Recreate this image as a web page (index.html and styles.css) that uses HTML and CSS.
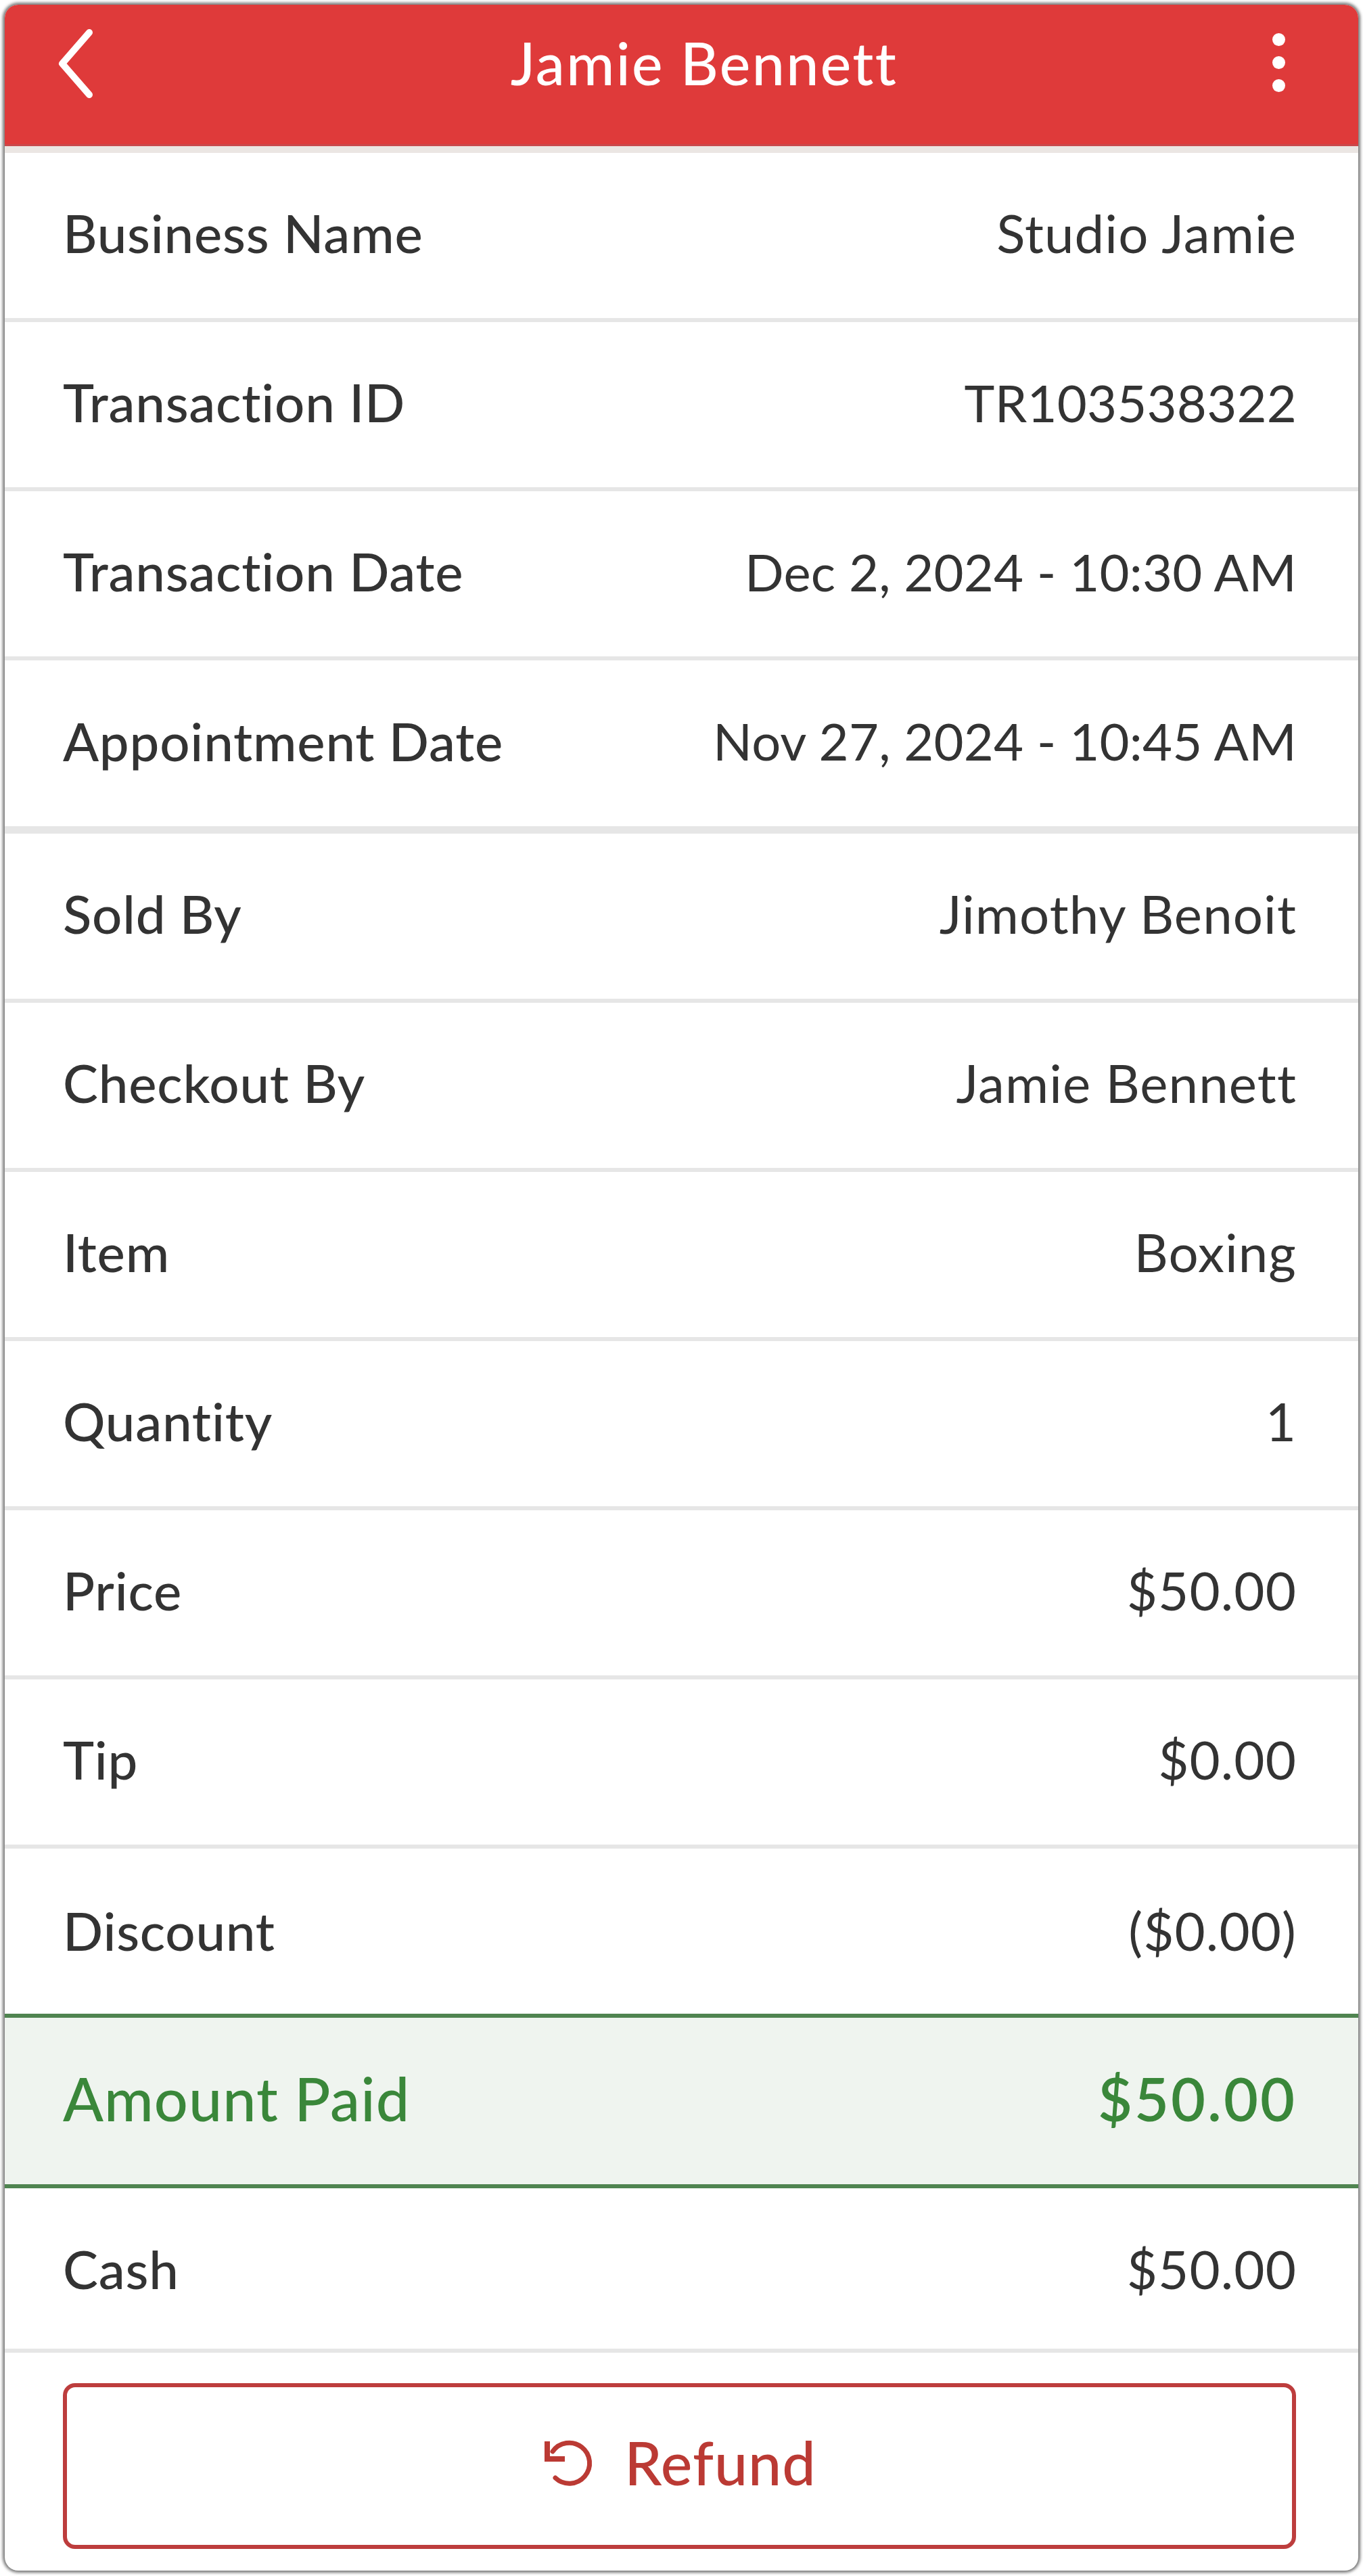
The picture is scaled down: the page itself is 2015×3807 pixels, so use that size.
FILE: index.html
```html
<!DOCTYPE html>
<html lang="en">

<head>
  <meta charset="UTF-8">
  <title>Jamie Bennett</title>
  <link rel="stylesheet" href="styles.css">
</head>

<body>
  <div class="phone">
    <div class="top-bar">
      <svg class="back-icon" width="60" height="110" viewBox="0 0 60 110">
        <polyline points="46,10 6,56 46,102" />
      </svg>
      <h1 class="title">Jamie Bennett</h1>
      <div class="menu-dots"><i></i><i></i><i></i></div>
    </div>

    <div class="row">
      <span class="label">Business Name</span>
      <span class="value">Studio Jamie</span>
    </div>
    <div class="row">
      <span class="label">Transaction ID</span>
      <span class="value value-tight">TR103538322</span>
    </div>
    <div class="row">
      <span class="label">Transaction Date</span>
      <span class="value value-tight">Dec 2, 2024 - 10:30 AM</span>
    </div>
    <div class="row row-end">
      <span class="label">Appointment Date</span>
      <span class="value value-tight">Nov 27, 2024 - 10:45 AM</span>
    </div>
    <div class="row">
      <span class="label">Sold By</span>
      <span class="value">Jimothy Benoit</span>
    </div>
    <div class="row">
      <span class="label">Checkout By</span>
      <span class="value">Jamie Bennett</span>
    </div>
    <div class="row">
      <span class="label">Item</span>
      <span class="value">Boxing</span>
    </div>
    <div class="row">
      <span class="label">Quantity</span>
      <span class="value">1</span>
    </div>
    <div class="row">
      <span class="label">Price</span>
      <span class="value">$50.00</span>
    </div>
    <div class="row">
      <span class="label">Tip</span>
      <span class="value">$0.00</span>
    </div>
    <div class="row row-plain">
      <span class="label">Discount</span>
      <span class="value">($0.00)</span>
    </div>
    <div class="row row-total">
      <span class="label">Amount Paid</span>
      <span class="value">$50.00</span>
    </div>
    <div class="row row-short">
      <span class="label">Cash</span>
      <span class="value">$50.00</span>
    </div>

    <div class="actions">
      <button class="refund-btn">
        <svg class="refund-icon" width="75" height="75" viewBox="0 0 75 75">
          <path d="M15 22 A30 30 0 1 1 19 61" />
          <polyline points="7,7 7,33 33,33" />
        </svg>
        <span>Refund</span>
      </button>
    </div>
  </div>
</body>

</html>
```
FILE: styles.css
```css
* {
  padding: 0;
  margin: 0;
  box-sizing: border-box;
}

body {
  background-color: #fff;
  font-family: "Lato", "Liberation Sans", sans-serif;
  color: #333;
  padding: 7px;
}

.phone {
  height: 3792px;
  background-color: #fff;
  border-radius: 20px;
  box-shadow: 0 0 4px 3px #787878;
  overflow: hidden;
}

.top-bar {
  display: flex;
  align-items: center;
  justify-content: space-between;
  height: 219px;
  padding: 0 108px 38px 79px;
  background-color: #df3a3a;
  border-bottom: 10px solid #ebe6e3;
  box-shadow: inset 0 -3px 0 #c9474a;
}

.back-icon polyline {
  fill: none;
  stroke: #fff;
  stroke-width: 10;
  stroke-linecap: round;
  stroke-linejoin: round;
}

.title {
  margin-left: 55px;
  font-size: 86px;
  font-weight: 500;
  letter-spacing: 2.4px;
  color: #fff;
}

.menu-dots {
  display: flex;
  flex-direction: column;
  gap: 15px;
}

.menu-dots i {
  display: block;
  width: 19px;
  height: 19px;
  border-radius: 50%;
  background-color: #fff;
}

.row {
  display: flex;
  align-items: center;
  justify-content: space-between;
  height: 250px;
  padding: 0 91px 8px 86px;
  border-bottom: 6px solid #e6e6e6;
  font-size: 78px;
}

.row-end {
  height: 256px;
  border-bottom-width: 11px;
}

.row-plain {
  height: 244px;
  padding-bottom: 2px;
  border-bottom: 0;
}

.row-short {
  height: 243px;
  padding-bottom: 0;
}

.label {
  font-weight: 500;
  letter-spacing: 0.8px;
}

.value {
  letter-spacing: 1.1px;
}

.value-tight {
  font-size: 76px;
  letter-spacing: 0.2px;
}

.row-total {
  height: 258px;
  padding-bottom: 8px;
  font-size: 88px;
  color: #3a873a;
  background-color: #eff4ef;
  border-top: 6px solid #4f8450;
  border-bottom: 6px solid #4f8450;
}

.row-total .label {
  letter-spacing: 1.1px;
}

.row-total .value {
  font-weight: 600;
  letter-spacing: 3px;
}

.actions {
  padding: 45px 92px 0 86px;
}

.refund-btn {
  display: flex;
  align-items: center;
  justify-content: center;
  gap: 46px;
  width: 100%;
  height: 245px;
  padding-bottom: 12px;
  background-color: #fff;
  border: 6px solid #bd3d3d;
  border-radius: 18px;
  font: 500 88px "Lato", "Liberation Sans", sans-serif;
  letter-spacing: 1px;
  color: #bb3a34;
}

.refund-icon path {
  fill: none;
  stroke: #bb3a34;
  stroke-width: 7;
  stroke-linecap: round;
}

.refund-icon polyline {
  fill: none;
  stroke: #bb3a34;
  stroke-width: 8;
}
```
